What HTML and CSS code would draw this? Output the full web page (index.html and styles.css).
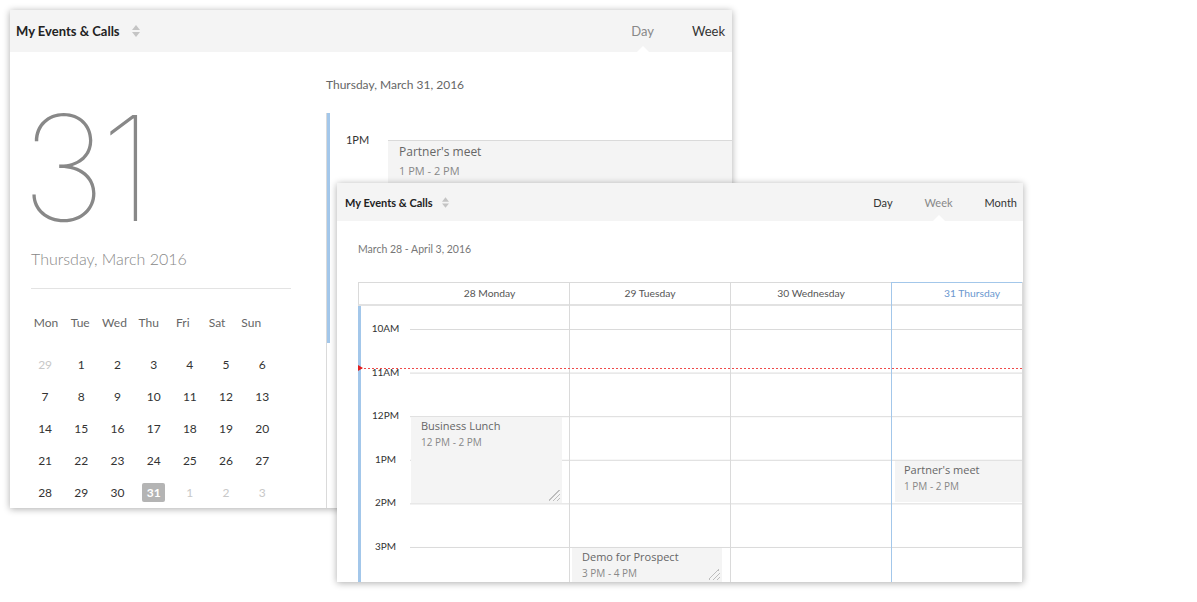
FILE: index.html
```html
<!DOCTYPE html>
<html lang="en">
<head>
  <meta charset="UTF-8" />
  <title>My Events &amp; Calls</title>
  <link rel="stylesheet" href="styles.css">
</head>
<body>
  <div class="desk">

    <!-- === DAY VIEW (back window) === -->
    <section class="win win-day">
      <header class="win-bar">
        <div class="win-title">
          My Events &amp; Calls
          <svg class="sort" viewBox="0 0 8 12" width="8" height="12"><path d="M0 5 L4 0 L8 5 Z M0 7 L4 12 L8 7 Z" fill="#c4c4c4"/></svg>
        </div>
        <nav class="tabs">
          <span class="tab active">Day</span>
          <span class="tab">Week</span>
        </nav>
      </header>

      <div class="day-layout">
        <aside class="mini">
          <div class="big-date">31</div>
          <div class="big-sub">Thursday, March 2016</div>
          <div class="mini-rule"></div>
          <div class="mini-week">
            <span>Mon</span><span>Tue</span><span>Wed</span><span>Thu</span><span>Fri</span><span>Sat</span><span>Sun</span>
          </div>
          <div class="mini-dates">
            <span class="dim">29</span><span>1</span><span>2</span><span>3</span><span>4</span><span>5</span><span>6</span>
            <span>7</span><span>8</span><span>9</span><span>10</span><span>11</span><span>12</span><span>13</span>
            <span>14</span><span>15</span><span>16</span><span>17</span><span>18</span><span>19</span><span>20</span>
            <span>21</span><span>22</span><span>23</span><span>24</span><span>25</span><span>26</span><span>27</span>
            <span>28</span><span>29</span><span>30</span><span><b class="sel">31</b></span><span class="dim">1</span><span class="dim">2</span><span class="dim">3</span>
          </div>
        </aside>

        <div class="day-main">
          <div class="day-title">Thursday, March 31, 2016</div>
          <div class="day-line">
            <div class="hour-row">
              <span class="hour-label">1PM</span>
              <div class="hour-slot">
                <div class="event event-wide">
                  <div class="ev-name">Partner's meet</div>
                  <div class="ev-time">1 PM - 2 PM</div>
                </div>
              </div>
            </div>
          </div>
        </div>
      </div>
    </section>

    <!-- === WEEK VIEW (front window) === -->
    <section class="win win-week">
      <header class="win-bar">
        <div class="win-title">
          My Events &amp; Calls
          <svg class="sort" viewBox="0 0 8 12" width="7" height="11"><path d="M0 5 L4 0 L8 5 Z M0 7 L4 12 L8 7 Z" fill="#c4c4c4"/></svg>
        </div>
        <nav class="tabs">
          <span class="tab">Day</span>
          <span class="tab active">Week</span>
          <span class="tab">Month</span>
        </nav>
      </header>

      <div class="week-body">
        <div class="range">March 28 - April 3, 2016</div>

        <div class="week">
          <div class="gutter">
            <div class="head"></div>
            <div class="gutter-body">
              <div class="t-label">10AM</div>
              <div class="t-label">11AM</div>
              <div class="t-label">12PM</div>
              <div class="t-label">1PM</div>
              <div class="t-label">2PM</div>
              <div class="t-label">3PM</div>
            </div>
          </div>

          <div class="day first">
            <div class="head">28 Monday</div>
            <div class="day-body">
              <div class="event grip" style="top: 111px; height: 86px;">
                <div class="ev-name">Business Lunch</div>
                <div class="ev-time">12 PM - 2 PM</div>
              </div>
            </div>
          </div>

          <div class="day">
            <div class="head">29 Tuesday</div>
            <div class="day-body">
              <div class="event grip" style="top: 242px; height: 34px;">
                <div class="ev-name">Demo for Prospect</div>
                <div class="ev-time">3 PM - 4 PM</div>
              </div>
            </div>
          </div>

          <div class="day">
            <div class="head">30 Wednesday</div>
            <div class="day-body"></div>
          </div>

          <div class="day today">
            <div class="head">31 Thursday</div>
            <div class="day-body">
              <div class="event" style="top: 155px; height: 41px;">
                <div class="ev-name">Partner's meet</div>
                <div class="ev-time">1 PM - 2 PM</div>
              </div>
            </div>
          </div>

          <div class="now"></div>
        </div>
      </div>
    </section>

  </div>
</body>
</html>
```

FILE: styles.css
```css
body {
  margin: 0;
  background: #fff;
  font-family: 'Lato', 'Open Sans', sans-serif;
  color: #333;
}

.desk {
  position: relative;
  width: 1197px;
  height: 602px;
  overflow: hidden;
}

/* === WINDOWS === */
.win {
  position: absolute;
  background: #fff;
  overflow: hidden;
  display: flex;
  flex-direction: column;
  box-shadow: 0 1px 7px rgba(0, 0, 0, 0.33);
}

.win-day {
  left: 10px;
  top: 10px;
  width: 722px;
  height: 498px;
}

.win-week {
  left: 337px;
  top: 183px;
  width: 686px;
  height: 399px;
}

.win-bar {
  display: flex;
  justify-content: space-between;
  align-items: stretch;
  background: #f4f4f4;
  flex: none;
}

.win-day .win-bar {
  height: 42px;
  padding: 0 7px 0 6px;
  font-size: 13px;
}

.win-week .win-bar {
  height: 38px;
  padding: 0 6px 0 8px;
  font-size: 11px;
}

.win-title {
  display: flex;
  align-items: center;
  gap: 12px;
  font-weight: 700;
  color: #222;
}

.win-week .win-title {
  gap: 9px;
}

.tabs {
  display: flex;
  align-items: stretch;
}

.tab {
  position: relative;
  display: flex;
  align-items: center;
  color: #333;
}

.win-day .tab + .tab { margin-left: 38px; }
.win-week .tab + .tab { margin-left: 32px; }

.tab.active {
  color: #888;
}

.tab.active::after {
  content: "";
  position: absolute;
  bottom: 0;
  left: 50%;
  margin-left: -6px;
  border-left: 6px solid transparent;
  border-right: 6px solid transparent;
  border-bottom: 6px solid #fff;
}

/* === DAY VIEW === */
.day-layout {
  flex: 1;
  display: flex;
}

.mini {
  width: 316px;
  flex: none;
  box-sizing: border-box;
  padding-left: 20px;
}

.big-date {
  height: 148px;
  margin-top: 43px;
  margin-left: -9px;
  font-family: 'Inter', 'Lato', sans-serif;
  font-weight: 100;
  font-size: 146px;
  line-height: 146px;
  letter-spacing: -6px;
  color: #888;
}

.big-sub {
  margin-top: 6px;
  margin-left: 1px;
  font-size: 16px;
  font-weight: 300;
  line-height: 20px;
  color: #888;
}

.mini-rule {
  margin: 19px 0 0 1px;
  width: 260px;
  border-top: 1px solid #e3e3e3;
}

.mini-week {
  display: grid;
  grid-template-columns: repeat(7, 34.2px);
  margin: 24px 0 0 -1px;
  font-size: 12px;
  line-height: 20px;
  color: #666;
  text-align: center;
}

.mini-dates {
  display: grid;
  grid-template-columns: repeat(7, 36.2px);
  grid-auto-rows: 32px;
  margin: 15px 0 0 -3px;
  font-size: 12px;
  color: #333;
  text-align: center;
}

.mini-dates span {
  display: flex;
  align-items: center;
  justify-content: center;
}

.mini-dates .dim {
  color: #c8c8c8;
}

.sel {
  display: inline-block;
  width: 23px;
  height: 19px;
  line-height: 19px;
  border-radius: 2px;
  background: #b4b4b4;
  color: #fff;
  font-weight: 700;
}

.day-main {
  flex: 1;
  display: flex;
  flex-direction: column;
}

.day-title {
  padding-top: 24px;
  font-size: 12px;
  line-height: 18px;
  color: #666;
}

.day-line {
  position: relative;
  flex: 1;
  margin-top: 19px;
  border-left: 1px solid #dadada;
}

.day-line::before {
  content: "";
  position: absolute;
  left: 0;
  top: 0;
  width: 3px;
  height: 230px;
  background: #a3c7ea;
}

.hour-row {
  display: flex;
  margin-top: 17px;
}

.hour-label {
  width: 61px;
  flex: none;
  text-align: center;
  font-size: 11px;
  line-height: 20px;
  color: #333;
}

.hour-slot {
  flex: 1;
  margin-top: 10px;
  border-top: 1px solid #dadada;
}

/* === EVENTS === */
.event {
  position: absolute;
  left: 1px;
  width: 151px;
  box-sizing: border-box;
  padding: 1px 10px;
  background: #f4f4f4;
  font-family: 'Open Sans', sans-serif;
  color: #666;
}

.event-wide {
  position: static;
  width: auto;
  height: 60px;
  padding: 1px 11px;
}

.ev-name {
  font-size: 11px;
  line-height: 16px;
}

.ev-time {
  font-size: 10px;
  line-height: 16px;
  color: #888;
}

.event-wide .ev-name {
  font-size: 12px;
  line-height: 19px;
}

.event-wide .ev-time {
  font-size: 11px;
  line-height: 19px;
}

.event.grip::after {
  content: "";
  position: absolute;
  right: 2px;
  bottom: 2px;
  width: 11px;
  height: 11px;
  background: linear-gradient(135deg, transparent 0 44%, #bdbdbd 44% 50%, transparent 50% 64%, #bdbdbd 64% 70%, transparent 70% 84%, #bdbdbd 84% 90%, transparent 90%);
}

/* === WEEK VIEW === */
.week-body {
  flex: 1;
  display: flex;
  flex-direction: column;
  padding-left: 21px;
  min-height: 0;
}

.range {
  padding-top: 20px;
  font-size: 10.5px;
  line-height: 16px;
  color: #777;
}

.week {
  position: relative;
  flex: 1;
  display: flex;
  margin-top: 25px;
  overflow: hidden;
  border-right: 1px solid #dadada;
}

.gutter {
  width: 52px;
  flex: none;
}

.head {
  height: 24px;
  box-sizing: border-box;
  border-top: 1px solid #dadada;
  border-bottom: 2px solid #e2e2e2;
  font-size: 10.3px;
  line-height: 21px;
  text-align: center;
  color: #555;
}

.gutter .head {
  border-left: 1px solid #dadada;
}

.gutter-body {
  height: 100%;
  box-sizing: border-box;
  border-left: 3px solid #a3c7ea;
  padding-top: 1px;
}

.t-label {
  height: 43.6px;
  line-height: 43.6px;
  font-size: 10px;
  text-align: center;
  color: #333;
}

.day {
  width: 160px;
  flex: none;
  border-left: 1px solid #dadada;
}

.day.first {
  width: 159px;
  border-left: none;
}

.day-body {
  position: relative;
  height: 100%;
  background-image: linear-gradient(#dadada 0 1px, transparent 1px);
  background-size: 100% 43.6px;
  background-position: 0 23px;
  background-repeat: repeat-y;
}

.day .event { left: 2px; width: 150px; }
.day.first .event { left: 1px; width: 151px; }
.day.today .event { left: 3px; width: 140px; padding-left: 9px; }

.day.today {
  border-left-color: #a3c7ea;
}

.day.today .head {
  border-top-color: #a3c7ea;
  color: #6b98cf;
}

.now {
  position: absolute;
  left: 2px;
  right: 0;
  top: 86px;
  height: 1px;
  background: repeating-linear-gradient(to right, #f04a4a 0 2px, transparent 2px 4px);
}

.now::before {
  content: "";
  position: absolute;
  left: -2px;
  top: -3px;
  border-left: 5px solid #e02020;
  border-top: 3px solid transparent;
  border-bottom: 3px solid transparent;
}
```
